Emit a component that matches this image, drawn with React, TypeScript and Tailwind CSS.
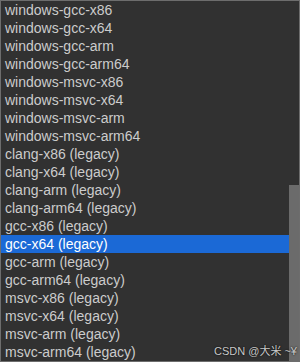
import React from "react";

const items = [
  "windows-gcc-x86",
  "windows-gcc-x64",
  "windows-gcc-arm",
  "windows-gcc-arm64",
  "windows-msvc-x86",
  "windows-msvc-x64",
  "windows-msvc-arm",
  "windows-msvc-arm64",
  "clang-x86 (legacy)",
  "clang-x64 (legacy)",
  "clang-arm (legacy)",
  "clang-arm64 (legacy)",
  "gcc-x86 (legacy)",
  "gcc-x64 (legacy)",
  "gcc-arm (legacy)",
  "gcc-arm64 (legacy)",
  "msvc-x86 (legacy)",
  "msvc-x64 (legacy)",
  "msvc-arm (legacy)",
  "msvc-arm64 (legacy)",
];

export default function App() {
  return (
    <div
      className="relative flex w-[300px] h-[362px] border border-[#6d6d6d] bg-[#313131] overflow-hidden"
      style={{ fontFamily: '"Liberation Sans", Arial, sans-serif' }}
    >
      <div className="flex flex-col w-[288px]">
        {items.map((it, i) => (
          <div
            key={it}
            className={
              i === 13
                ? "h-[18px] flex items-center pl-[4px] text-[14px] leading-none bg-[#1b69d6] text-white"
                : "h-[18px] flex items-center pl-[4px] text-[14px] leading-none text-[#cccccc]"
            }
          >
            {it}
          </div>
        ))}
      </div>
      <div className="flex flex-col w-[10px]">
        <div className="h-[184px]" />
        <div className="flex-1 bg-[#6b6b6b]" />
      </div>
      <div
        className="absolute right-[2px] bottom-[4px] text-[11px] leading-none text-[#c8c8c8] [text-shadow:0_0_2px_#000]"
        style={{ fontFamily: '"Liberation Sans", "Noto Sans CJK SC", sans-serif' }}
      >
        CSDN @大米 ~¥
      </div>
    </div>
  );
}
